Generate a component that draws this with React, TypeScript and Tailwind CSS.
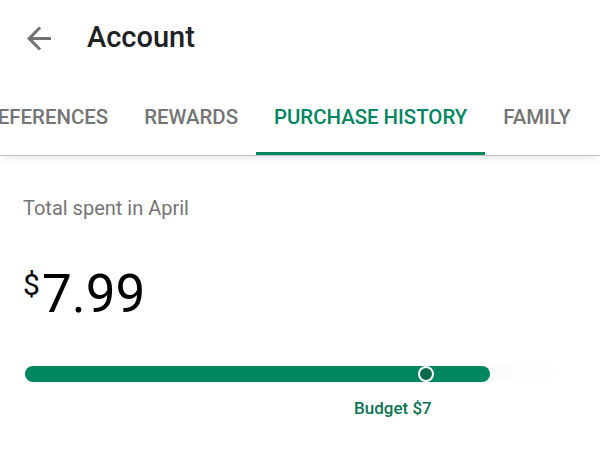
import { MdArrowBack } from "react-icons/md";

const tabs = [
  { label: "Preferences", active: false },
  { label: "Rewards", active: false },
  { label: "Purchase history", active: true },
  { label: "Family", active: false },
];

export default function App() {
  return (
    <div className="h-[454px] w-[600px] overflow-hidden bg-white font-['Roboto',sans-serif]">
      <header className="flex h-[76px] items-center">
        <button type="button" className="ml-[21px] flex h-[36px] w-[36px] items-center justify-center text-[#737373]">
          <MdArrowBack className="h-[37px] w-[37px]" />
        </button>
        <h1 className="ml-[30px] text-[29px] font-medium text-[#202124]">Account</h1>
      </header>

      <nav className="relative z-10 overflow-hidden border-b border-[#c4c4c4] shadow-[0_5px_8px_-3px_rgba(0,0,0,0.1)]">
        <div className="-ml-[46px] flex h-[79px] whitespace-nowrap pt-[3px]">
          {tabs.map((tab) => (
            <div
              key={tab.label}
              className={
                tab.active
                  ? "relative flex items-center px-[18px] text-[20.4px] font-medium uppercase text-[#01875f]"
                  : "relative flex items-center px-[18px] text-[20.4px] font-medium uppercase text-[#757575]"
              }
            >
              {tab.label}
              {tab.active ? (
                <span className="absolute bottom-0 left-0 right-0 h-[3px] bg-[#01875f]" />
              ) : null}
            </div>
          ))}
        </div>
      </nav>

      <section className="px-[23px] pt-[40px]">
        <p className="text-[20px] leading-[24px] text-[#757575]">Total spent in April</p>

        <div className="mt-[48px] flex items-start text-black">
          <span className="mt-[2px] text-[30px] leading-[30px]">$</span>
          <span className="ml-[2px] text-[53px] leading-[52px]">7.99</span>
        </div>

        <div className="relative ml-[2px] mt-[46px] h-[16px] w-[551px] rounded-full bg-gradient-to-r from-[#eeeeee] via-[#f3f3f3] to-white">
          <div className="h-[16px] w-[465px] rounded-full bg-[#01875f]" />
          <span className="absolute left-[393px] top-[0px] h-[16px] w-[16px] rounded-full border-2 border-white bg-[#0a6b4c]" />
        </div>

        <p className="mt-[14px] pl-[331px] text-[17px] font-medium text-[#0b7552]">Budget $7</p>
      </section>
    </div>
  );
}
